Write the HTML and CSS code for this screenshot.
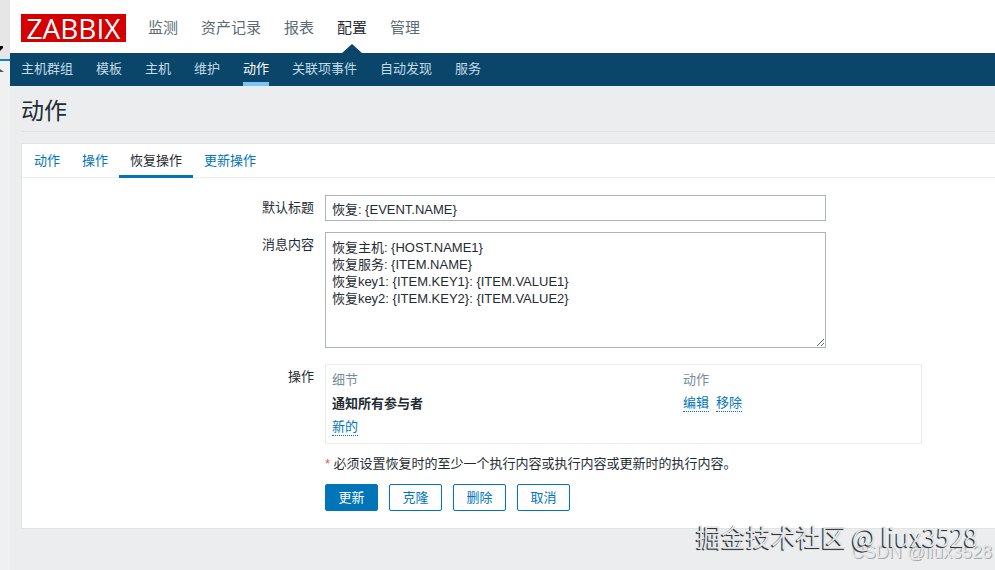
FILE: index.html
```html
<!DOCTYPE html>
<html lang="zh-CN">
<head>
    <meta charset="UTF-8">
    <meta name="viewport" content="width=device-width, initial-scale=1.0">
    <title>动作</title>
    <link rel="stylesheet" href="styles.css">
</head>
<body>
    <div class="side">
        <svg class="side-marks" viewBox="0 0 10 40" aria-hidden="true">
            <path d="M0 6h3v2L0 11z" fill="#000"/>
            <path d="M0 29l4 3H0z" fill="#555"/>
        </svg>
    </div>

    <div class="page">
        <header>
            <div class="top">
                <a class="logo" href="#">ZABBIX</a>
                <nav class="menu">
                    <a href="#">监测</a>
                    <a href="#">资产记录</a>
                    <a href="#">报表</a>
                    <a href="#" class="selected">配置</a>
                    <a href="#">管理</a>
                </nav>
            </div>
            <nav class="submenu">
                <a href="#">主机群组</a>
                <a href="#">模板</a>
                <a href="#">主机</a>
                <a href="#">维护</a>
                <a href="#" class="selected">动作</a>
                <a href="#">关联项事件</a>
                <a href="#">自动发现</a>
                <a href="#">服务</a>
            </nav>
        </header>

        <h1>动作</h1>

        <main class="card">
            <nav class="tabs">
                <a href="#">动作</a>
                <a href="#">操作</a>
                <a href="#" class="selected">恢复操作</a>
                <a href="#">更新操作</a>
            </nav>

            <form class="form" onsubmit="return false">
                <label for="subject">默认标题</label>
                <input type="text" id="subject" value="恢复: {EVENT.NAME}">

                <label for="message">消息内容</label>
                <textarea id="message" spellcheck="false">恢复主机: {HOST.NAME1}
恢复服务: {ITEM.NAME}
恢复key1: {ITEM.KEY1}: {ITEM.VALUE1}
恢复key2: {ITEM.KEY2}: {ITEM.VALUE2}</textarea>

                <span class="form-label" id="operations">操作</span>
                <div class="operations">
                    <table aria-labelledby="operations">
                        <thead>
                            <tr><th>细节</th><th>动作</th></tr>
                        </thead>
                        <tbody>
                            <tr>
                                <td><b>通知所有参与者</b></td>
                                <td class="row-actions"><a href="#">编辑</a><a href="#">移除</a></td>
                            </tr>
                            <tr>
                                <td colspan="2"><a href="#">新的</a></td>
                            </tr>
                        </tbody>
                    </table>
                </div>

                <div class="footer">
                    <p><span class="star">*</span> 必须设置恢复时的至少一个执行内容或执行内容或更新时的执行内容。</p>
                    <div class="buttons">
                        <button type="submit" class="primary">更新</button>
                        <button type="button">克隆</button>
                        <button type="button">删除</button>
                        <button type="button">取消</button>
                    </div>
                </div>
            </form>
        </main>
    </div>

    <div class="mark mark-small">CSDN @liux3528</div>
    <div class="mark mark-large">掘金技术社区 @ liux3528</div>
</body>
</html>
```
FILE: styles.css
```css
* {
    box-sizing: border-box;
}
body {
    margin: 0;
    min-height: 100vh;
    display: flex;
    position: relative;
    overflow: hidden;
    background-color: #ebedef;
    color: #1f2c33;
    font-family: "Liberation Sans", "Noto Sans CJK SC", sans-serif;
    font-size: 13px;
    line-height: 17px;
}
a {
    color: #0275b8;
    text-decoration: none;
}

/* strip at the left edge */
.side {
    flex: none;
    width: 10px;
    background: linear-gradient(#e6e6e6 59px, #0a86c0 59px, #0a86c0 61px, #f0f0f0 61px);
}
.side-marks {
    display: block;
    width: 10px;
    height: 40px;
    margin-top: 40px;
}
.page {
    flex: 1;
    min-width: 0;
}

/* header */
.top {
    display: flex;
    align-items: center;
    gap: 22px;
    height: 53px;
    padding: 3px 11px 0;
    background-color: #fff;
}
.logo {
    width: 105px;
    height: 28px;
    background-color: #d40000;
    color: #fff;
    font-family: "Open Sans", sans-serif;
    font-size: 28px;
    line-height: 28px;
    text-align: center;
}
.menu {
    display: flex;
    align-self: stretch;
    gap: 23px;
    font-size: 15px;
    line-height: 50px;
}
.menu a {
    position: relative;
    color: #5c6a72;
}
.menu .selected {
    color: #1f2c33;
}
.menu .selected::after {
    content: "";
    position: absolute;
    left: 50%;
    bottom: 0;
    margin-left: -10px;
    border: 10px solid transparent;
    border-top: 0;
    border-bottom: 9px solid #0a466a;
}
.submenu {
    display: flex;
    gap: 23px;
    height: 33px;
    padding: 0 11px;
    background-color: #0a466a;
    line-height: 32px;
}
.submenu a {
    color: #c3dbe8;
}
.submenu .selected {
    color: #fff;
    border-bottom: 4px solid #7dc4f2;
}
h1 {
    margin: 0 0 0 11px;
    padding: 11px 0 5px;
    border-bottom: 1px solid #dce2e5;
    font-size: 23px;
    font-weight: normal;
    line-height: 29px;
}

/* tabs and form */
.card {
    margin: 11px 0 0 11px;
    border: 1px solid #dfe4e7;
    border-right: 0;
    background-color: #fff;
}
.tabs {
    display: flex;
    height: 34px;
    border-bottom: 1px solid #ebeef0;
    line-height: 33px;
}
.tabs a {
    height: 34px;
    padding: 0 11px;
}
.tabs .selected {
    color: #1f2c33;
    border-bottom: 3px solid #0275b8;
}
.tabs a:first-child {
    margin-left: 1px;
}
.form {
    display: grid;
    grid-template-columns: 30% 1fr;
    column-gap: 11px;
    row-gap: 11px;
    padding: 17px 0;
}
.form > label,
.form-label {
    padding-top: 4px;
    text-align: right;
}
input,
textarea {
    width: 100%;
    max-width: 501px;
    border: 1px solid #acb4b9;
    border-radius: 0;
    background-color: #fff;
    color: #1f2c33;
    font: inherit;
}
input {
    height: 26px;
    padding: 0 6px;
}
textarea {
    display: block;
    height: 116px;
    padding: 6px;
    resize: both;
}
input:focus,
textarea:focus {
    outline: none;
    border-color: #0275b8;
}
.form-label,
.operations {
    margin-top: 5px;
}
.operations {
    max-width: 597px;
    padding: 2px 0 4px;
    border: 1px solid #ebeef0;
}
table {
    width: 100%;
    border-collapse: collapse;
    table-layout: fixed;
}
th,
td {
    height: 24px;
    padding: 0 6px;
    text-align: left;
}
th {
    color: #768d99;
    font-weight: normal;
}
th:last-child {
    width: 41%;
}
td a {
    display: inline-block;
    border-bottom: 1px dotted #0275b8;
}
.row-actions a {
    margin-right: 7px;
}
.footer {
    grid-column: 2;
}
.footer p {
    margin: 0 0 12px;
}
.star {
    color: #e45959;
}
.buttons {
    display: flex;
    gap: 11px;
}
button {
    min-width: 53px;
    height: 27px;
    padding: 0 12px;
    border: 1px solid #0275b8;
    border-radius: 2px;
    background-color: #fff;
    color: #0275b8;
    font: inherit;
    cursor: pointer;
}
.primary {
    background-color: #0275b8;
    color: #fff;
}

/* watermarks over the bottom corner */
.mark {
    position: absolute;
    font-family: "Noto Sans CJK SC", sans-serif;
    white-space: nowrap;
    pointer-events: none;
}
.mark-large {
    right: 17px;
    bottom: 16px;
    color: #e4e6e7;
    font-size: 25px;
    line-height: 36px;
    text-shadow: -1px 1px 0 #333, -1px 1px 1px #555;
}
.mark-small {
    right: 3px;
    bottom: 6px;
    color: #e4e6e8;
    font-family: "Liberation Sans", sans-serif;
    font-size: 18px;
    line-height: 24px;
    text-shadow: 1px 1px 0 #aaa;
}
```
